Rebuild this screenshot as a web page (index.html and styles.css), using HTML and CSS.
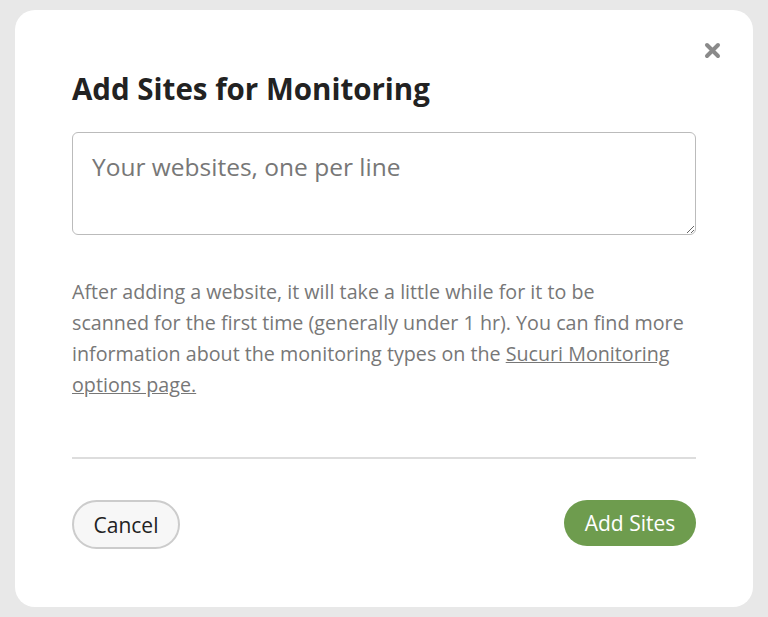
FILE: index.html
```html
<!DOCTYPE html>
<html>
<head>
<meta charset="utf-8">
<link rel="stylesheet" href="styles.css">
</head>
<body>
<div class="modal">
  <button class="close" aria-label="Close">
    <svg width="17" height="17" viewBox="0 0 17 17"><path d="M3 3 L14 14 M14 3 L3 14" stroke="#8a8a8a" stroke-width="4" stroke-linecap="round"/></svg>
  </button>
  <h1 class="title">Add Sites for Monitoring</h1>
  <textarea class="sites" placeholder="Your websites, one per line"></textarea>
  <p class="info">After adding a website, it will take a little while for it to be<br>scanned for the first time (generally under 1 hr). You can find more information about the monitoring types on the <a href="#">Sucuri Monitoring options page.</a></p>
  <hr class="sep">
  <div class="actions">
    <button class="btn cancel">Cancel</button>
    <button class="btn primary">Add Sites</button>
  </div>
</div>
</body>
</html>
```
FILE: styles.css
```css
html, body { margin: 0; padding: 0; }
body {
  background: #e8e8e8;
  font-family: "Open Sans", "Noto Sans", sans-serif;
  padding: 10px 15px 10px 15px;
  height: 617px;
  box-sizing: border-box;
}
.modal {
  position: relative;
  background: #fff;
  border-radius: 20px;
  height: 597px;
  box-sizing: border-box;
  padding: 62px 57px 0 57px;
}
.close {
  position: absolute;
  top: 32px;
  right: 32px;
  border: 0;
  background: none;
  padding: 0;
  width: 17px;
  height: 17px;
  cursor: pointer;
}
.close svg { display: block; }
.title {
  margin: 0;
  font-size: 29.5px;
  line-height: 34px;
  font-weight: 700;
  color: #222;
}
.sites {
  display: block;
  margin-top: 26px;
  width: 100%;
  height: 103px;
  box-sizing: border-box;
  border: 1px solid #bbb;
  border-radius: 6px;
  padding: 17px 17px 16px 19px;
  font-family: inherit;
  font-size: 24.5px;
  line-height: 34px;
  resize: vertical;
}
.sites::placeholder { color: #777; }
.info {
  margin: 41px 0 0 0;
  font-size: 19.7px;
  line-height: 31px;
  color: #777;
}
.info a { color: #777; }
.sep {
  border: 0;
  border-top: 2px solid #ddd;
  margin: 57px 0 0 0;
}
.actions {
  display: flex;
  justify-content: space-between;
  align-items: flex-start;
  margin-top: 41px;
}
.btn {
  font-family: inherit;
  font-size: 21px;
  border-radius: 25px;
  cursor: pointer;
  padding: 0;
}
.cancel {
  background: #f7f7f7;
  border: 2px solid #ccc;
  color: #222;
  width: 108px;
  height: 49px;
}
.primary {
  background: #6e9c4e;
  border: 0;
  color: #fff;
  width: 132px;
  height: 46px;
}
```
